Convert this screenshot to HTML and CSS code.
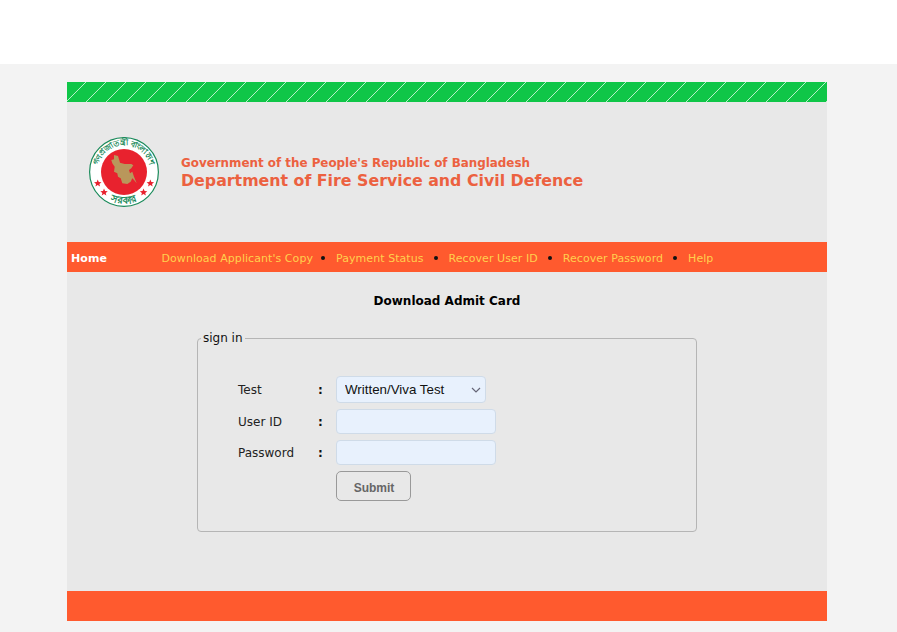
FILE: index.html
```html
<!DOCTYPE html>
<html lang="en">
<head>
  <meta charset="UTF-8">
  <meta name="viewport" content="width=device-width, initial-scale=1.0">
  <title>Download Admit Card</title>
  <link rel="stylesheet" href="styles.css">
</head>
<body>
  <div class="top-band"></div>

  <div class="wrapper">
    <div class="stripe"></div>

    <!-- Header -->
    <div class="header">
      <svg class="seal" viewBox="0 0 70 70" role="img" aria-label="Government seal">
        <defs>
          <path id="arc-top" d="M10 44 A26.6 26.6 0 1 1 60 44"/>
          <path id="arc-bottom" d="M10.9 56 A32 32 0 0 0 59.1 56"/>
        </defs>
        <circle cx="35" cy="35" r="34.4" fill="#fff" stroke="#1a8a5a" stroke-width="1.2"/>
        <circle cx="35" cy="35" r="23" fill="#e8222e"/>
        <text class="seal-text"><textPath href="#arc-top" startOffset="50%" text-anchor="middle">গণপ্রজাতন্ত্রী বাংলাদেশ</textPath></text>
        <text class="seal-text seal-word"><textPath href="#arc-bottom" startOffset="50%" text-anchor="middle">সরকার</textPath></text>
        <path class="seal-map" d="M25 18 L29 19 L30 22.3 L31 25.7 L35.7 27 L42.3 27 L44.3 28.3 L42.3 31.3 L40 33 L41 36.3 L43.3 34.7 L45 39.7 L47.7 46.3 L45 43 L43.3 41.3 L41.7 44.7 L38.3 47 L33.3 46.3 L31.7 41.3 L29 39.7 L28.3 36.3 L25 34.7 L25.7 29.7 L23.3 26.3 L22.3 23 L25 22.3 Z"/>
        <path class="seal-star" d="M8.7 42.5 l1.1 2.5 2.7 .2 -2.1 1.7 .7 2.6 -2.4 -1.4 -2.3 1.4 .7 -2.6 -2.1 -1.7 2.7 -.2z"/>
        <path class="seal-star" d="M61.3 42.5 l1.1 2.5 2.7 .2 -2.1 1.7 .7 2.6 -2.4 -1.4 -2.3 1.4 .7 -2.6 -2.1 -1.7 2.7 -.2z"/>
        <path class="seal-star" d="M15 51.5 l1.1 2.5 2.7 .2 -2.1 1.7 .7 2.6 -2.4 -1.4 -2.3 1.4 .7 -2.6 -2.1 -1.7 2.7 -.2z"/>
        <path class="seal-star" d="M54.5 51.5 l1.1 2.5 2.7 .2 -2.1 1.7 .7 2.6 -2.4 -1.4 -2.3 1.4 .7 -2.6 -2.1 -1.7 2.7 -.2z"/>
      </svg>
      <div class="titles">
        <div class="gov-name">Government of the People's Republic of Bangladesh</div>
        <div class="dept-name">Department of Fire Service and Civil Defence</div>
      </div>
    </div>

    <!-- Menu -->
    <div class="menu">
      <a class="home" href="#">Home</a>
      <a href="#">Download Applicant's Copy</a>
      <span class="dot"></span>
      <a href="#">Payment Status</a>
      <span class="dot"></span>
      <a href="#">Recover User ID</a>
      <span class="dot"></span>
      <a href="#">Recover Password</a>
      <span class="dot"></span>
      <a href="#">Help</a>
    </div>

    <!-- Sign in form -->
    <div class="content">
      <h1>Download Admit Card</h1>
      <form>
        <fieldset>
          <legend>sign in</legend>
          <div class="form-grid">
            <label for="test">Test</label>
            <span class="colon">:</span>
            <select id="test">
              <option>Written/Viva Test</option>
            </select>

            <label for="user">User ID</label>
            <span class="colon">:</span>
            <input id="user" type="text">

            <label for="pass">Password</label>
            <span class="colon">:</span>
            <input id="pass" type="password">

            <button type="button">Submit</button>
          </div>
        </fieldset>
      </form>
    </div>

    <div class="footer"></div>
  </div>
</body>
</html>
```

FILE: styles.css
```css
html, body {
  margin: 0;
  padding: 0;
}
body {
  background: #f3f3f3;
  font-family: "DejaVu Sans", Verdana, sans-serif;
  overflow: hidden;
}
.top-band {
  height: 64px;
  background: #fff;
}
.wrapper {
  width: 760px;
  margin: 18px 0 11px 67px;
  background: #e8e8e8;
}
.stripe {
  height: 20px;
  background-color: #0fc648;
  background-image: repeating-linear-gradient(135deg, transparent 0, transparent 13.3px, #b8f0c8 13.3px, #b8f0c8 14.142px);
}
.header {
  height: 140px;
  display: flex;
  align-items: center;
  box-sizing: border-box;
  padding-left: 22px;
}
.seal {
  width: 70px;
  height: 70px;
  flex: none;
}
.seal-text {
  font-family: "Noto Sans", "DejaVu Sans", sans-serif;
  font-size: 8px;
  font-weight: bold;
  fill: #1a8a5a;
}
.seal-word {
  font-size: 10px;
}
.seal-map {
  fill: #b9975b;
}
.seal-star {
  fill: #e8222e;
}
.titles {
  margin-left: 22px;
  color: #ec6140;
  font-weight: bold;
  padding-top: 2px;
}
.gov-name {
  font-size: 11.9px;
  line-height: 16px;
}
.dept-name {
  font-size: 15.8px;
  line-height: 20px;
}
.menu {
  height: 30px;
  display: flex;
  align-items: center;
  background: #ff5a2e;
  font-size: 11px;
  letter-spacing: 0.06px;
  padding-left: 4px;
  padding-top: 2px;
  box-sizing: border-box;
}
.menu a {
  color: #ffd04d;
  text-decoration: none;
}
.menu a.home {
  color: #fff;
  font-weight: bold;
  width: 90.5px;
}
.dot {
  width: 4px;
  height: 4px;
  border-radius: 50%;
  background: #111;
  margin: 0 11px 0 10px;
}
.dot:first-of-type {
  margin-left: 8px;
}
.content {
  height: 319px;
  box-sizing: border-box;
  padding-top: 22px;
}
h1 {
  margin: 0;
  font-size: 12px;
  line-height: 15px;
  text-align: center;
  color: #000;
}
form {
  width: 500px;
  margin: 22px 0 0 130px;
}
fieldset {
  margin: 0;
  padding: 31px 0 0;
  border: 1px solid #b5b5b5;
  border-radius: 4px;
  height: 201px;
  box-sizing: border-box;
}
legend {
  margin-left: 3px;
  padding: 0 2px;
  font-size: 12px;
  color: #111;
  line-height: 14px;
}
.form-grid {
  display: grid;
  grid-template-columns: 80px 18px auto;
  justify-content: start;
  justify-items: start;
  align-items: center;
  row-gap: 6px;
  font-size: 12px;
  color: #222;
  margin-left: 40px;
}
.colon {
  font-weight: bold;
  color: #111;
}
select, input {
  box-sizing: border-box;
  background-color: #e8f1fd;
  border: 1px solid #cfdbe8;
  border-radius: 4px;
}
select {
  appearance: none;
  width: 150px;
  height: 27px;
  padding-left: 8px;
  font-family: "Liberation Sans", Arial, sans-serif;
  font-size: 13.333px;
  color: #111;
  background-image: url("data:image/svg+xml,%3Csvg xmlns='http://www.w3.org/2000/svg' width='10' height='6'%3E%3Cpath d='M1 1l4 4 4-4' fill='none' stroke='%23667' stroke-width='1.2'/%3E%3C/svg%3E");
  background-repeat: no-repeat;
  background-position: right 4px center;
}
input {
  width: 160px;
  height: 25px;
}
button {
  grid-column: 3;
  width: 75px;
  height: 30px;
  padding: 3px 0 0 1px;
  background: #e8e8e8;
  border: 1px solid #999;
  border-radius: 5px;
  color: #666;
  font-family: "Liberation Sans", Arial, sans-serif;
  font-size: 12px;
  font-weight: bold;
}
.footer {
  height: 30px;
  background: #ff5a2e;
}
```
